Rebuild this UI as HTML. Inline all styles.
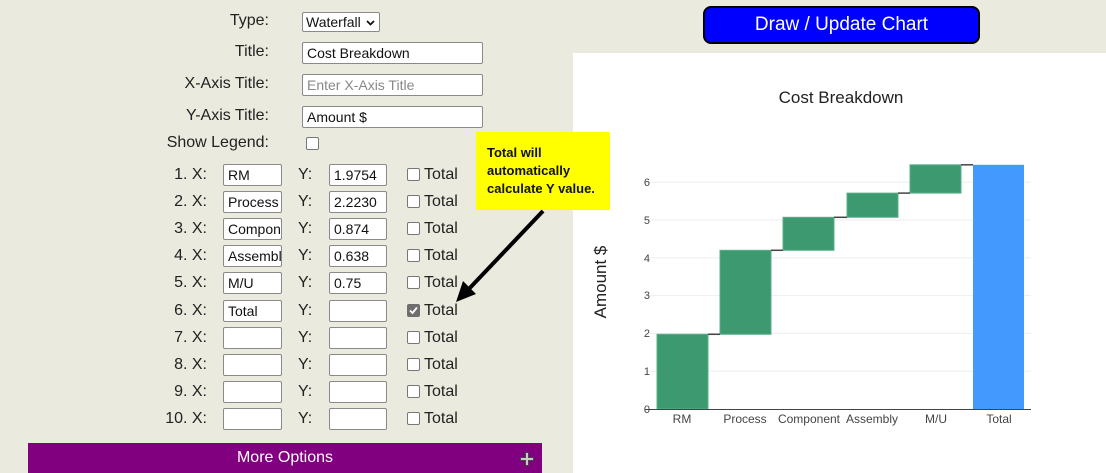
<!DOCTYPE html>
<html><head><style>
body{margin:0;width:1106px;height:473px;background:#ebeadf;font-family:"Liberation Sans",Arial,sans-serif;position:relative;overflow:hidden;color:#222}
.a{position:absolute}
.lbl{position:absolute;font-size:16px;text-align:right;line-height:20px}
.in{position:absolute;background:#fff;border:1px solid #8a8a8a;border-radius:2px;box-sizing:border-box;font-size:14px;line-height:20px;padding-left:4px;color:#111;overflow:hidden;white-space:nowrap}
.cb{position:absolute;width:13px;height:13px;border:1px solid #777;border-radius:2px;background:#fff;box-sizing:border-box}
.tot{position:absolute;font-size:16px;line-height:20px}
</style></head><body>

<div class="lbl" style="right:837px;top:11px">Type:</div>
<div class="in" style="left:302px;top:12px;width:78px;height:20px;line-height:18px;padding-left:3px">Waterfall<svg style="position:absolute;left:63px;top:7px" width="9" height="6"><path d="M1 1 L4.5 4.5 L8 1" stroke="#111" stroke-width="1.8" fill="none"/></svg></div>
<div class="lbl" style="right:837px;top:42px">Title:</div>
<div class="in" style="left:302px;top:42px;width:181px;height:22px">Cost Breakdown</div>
<div class="lbl" style="right:837px;top:74px">X-Axis Title:</div>
<div class="in" style="left:302px;top:74px;width:181px;height:22px;color:#888">Enter X-Axis Title</div>
<div class="lbl" style="right:837px;top:106px">Y-Axis Title:</div>
<div class="in" style="left:302px;top:106px;width:181px;height:22px">Amount $</div>
<div class="lbl" style="right:837px;top:133px">Show Legend:</div>
<div class="cb" style="left:306px;top:137px"></div>

<div id="rows"></div>
<script>
var d=[["RM","1.9754"],["Process","2.2230"],["Compon","0.874"],["Assembl","0.638"],["M/U","0.75"],["Total",""],["",""],["",""],["",""],["",""]];
var h="";
for(var i=0;i<10;i++){var y=164+i*27.1;
h+='<div class="lbl" style="right:899px;top:'+(y+1)+'px">'+(i+1)+'. X:</div>';
h+='<div class="in" style="left:223px;top:'+y+'px;width:59px;height:22px">'+d[i][0]+'</div>';
h+='<div class="lbl" style="left:298px;top:'+(y+1)+'px">Y:</div>';
h+='<div class="in" style="left:329px;top:'+y+'px;width:58px;height:22px">'+d[i][1]+'</div>';
h+='<div class="cb" style="left:407px;top:'+(y+4)+'px;'+(i==5?'background:#6e6e6e;border-color:#6e6e6e;':'')+'">'+(i==5?'<svg style="position:absolute;left:0;top:0" width="11" height="11"><path d="M2 5.5 L4.5 8 L9 2.5" stroke="#fff" stroke-width="1.8" fill="none"/></svg>':'')+'</div>';
h+='<div class="tot" style="left:424px;top:'+(y+1)+'px">Total</div>';}
document.getElementById("rows").innerHTML=h;
</script>

<div class="a" style="left:28px;top:443px;width:514px;height:30px;background:#800080;color:#fff;font-size:16px;text-align:center;line-height:29px">More Options</div>
<svg class="a" style="left:519px;top:451px" width="16" height="16"><path d="M8 1 V15 M1 8 H15" stroke="#444" stroke-width="4"/><path d="M8 2 V14 M2 8 H14" stroke="#ccc" stroke-width="2"/></svg>

<div class="a" style="left:703px;top:6px;width:277px;height:38px;box-sizing:border-box;background:#0000ff;border:2px solid #000;border-radius:8px;color:#fff;font-size:19px;text-align:center;line-height:34px">Draw / Update Chart</div>

<div class="a" style="left:573px;top:53px;width:533px;height:420px;background:#fff"></div>

<div class="a" style="left:476px;top:132px;width:134px;height:78px;background:#ffff00;font-size:13px;font-weight:bold;line-height:18px;padding:12px 0 0 11px;box-sizing:border-box;color:#111">Total will<br>automatically<br>calculate Y value.</div>

<svg class="a" style="left:0;top:0" width="1106" height="473">
<line x1="543" y1="211" x2="466" y2="292" stroke="#000" stroke-width="4"/>
<polygon points="456,302 463,281 476,294" fill="#000"/>
<text x="841" y="103" font-size="17" text-anchor="middle" fill="#222" font-family="Liberation Sans">Cost Breakdown</text>
<g stroke="#eee" stroke-width="1">
<line x1="645" y1="371.2" x2="1031" y2="371.2"/><line x1="645" y1="333.4" x2="1031" y2="333.4"/>
<line x1="645" y1="295.6" x2="1031" y2="295.6"/><line x1="645" y1="257.8" x2="1031" y2="257.8"/>
<line x1="645" y1="220" x2="1031" y2="220"/><line x1="645" y1="182.2" x2="1031" y2="182.2"/>
</g>
<g font-size="11" fill="#444" text-anchor="end" font-family="Liberation Sans">
<text x="650" y="413">0</text><text x="650" y="375">1</text><text x="650" y="337">2</text><text x="650" y="299">3</text><text x="650" y="262">4</text><text x="650" y="224">5</text><text x="650" y="186">6</text>
</g>
<text transform="translate(606,282) rotate(-90)" font-size="17" text-anchor="middle" fill="#222" font-family="Liberation Sans">Amount $</text>
<g fill="#3d9970" stroke="#5bb08a" stroke-width="1">
<rect x="657" y="334.3" width="51" height="74.7"/>
<rect x="720" y="250.3" width="51" height="84"/>
<rect x="783" y="217.3" width="51" height="33"/>
<rect x="847" y="193.1" width="51" height="24.2"/>
<rect x="910" y="164.8" width="51" height="28.3"/>
</g>
<rect x="973" y="164.8" width="51" height="244.2" fill="#4499ff"/>
<g stroke="#444" stroke-width="1.5">
<line x1="708" y1="334.3" x2="720" y2="334.3"/><line x1="771" y1="250.3" x2="783" y2="250.3"/>
<line x1="834" y1="217.3" x2="847" y2="217.3"/><line x1="898" y1="193.1" x2="910" y2="193.1"/>
<line x1="961" y1="164.8" x2="973" y2="164.8"/>
</g>
<line x1="645" y1="409.5" x2="1031" y2="409.5" stroke="#444" stroke-width="1"/>
<g font-size="12" fill="#444" text-anchor="middle" font-family="Liberation Sans">
<text x="682" y="423">RM</text><text x="745" y="423">Process</text><text x="809" y="423">Component</text><text x="872" y="423">Assembly</text><text x="936" y="423">M/U</text><text x="999" y="423">Total</text>
</g>
</svg>
</body></html>
